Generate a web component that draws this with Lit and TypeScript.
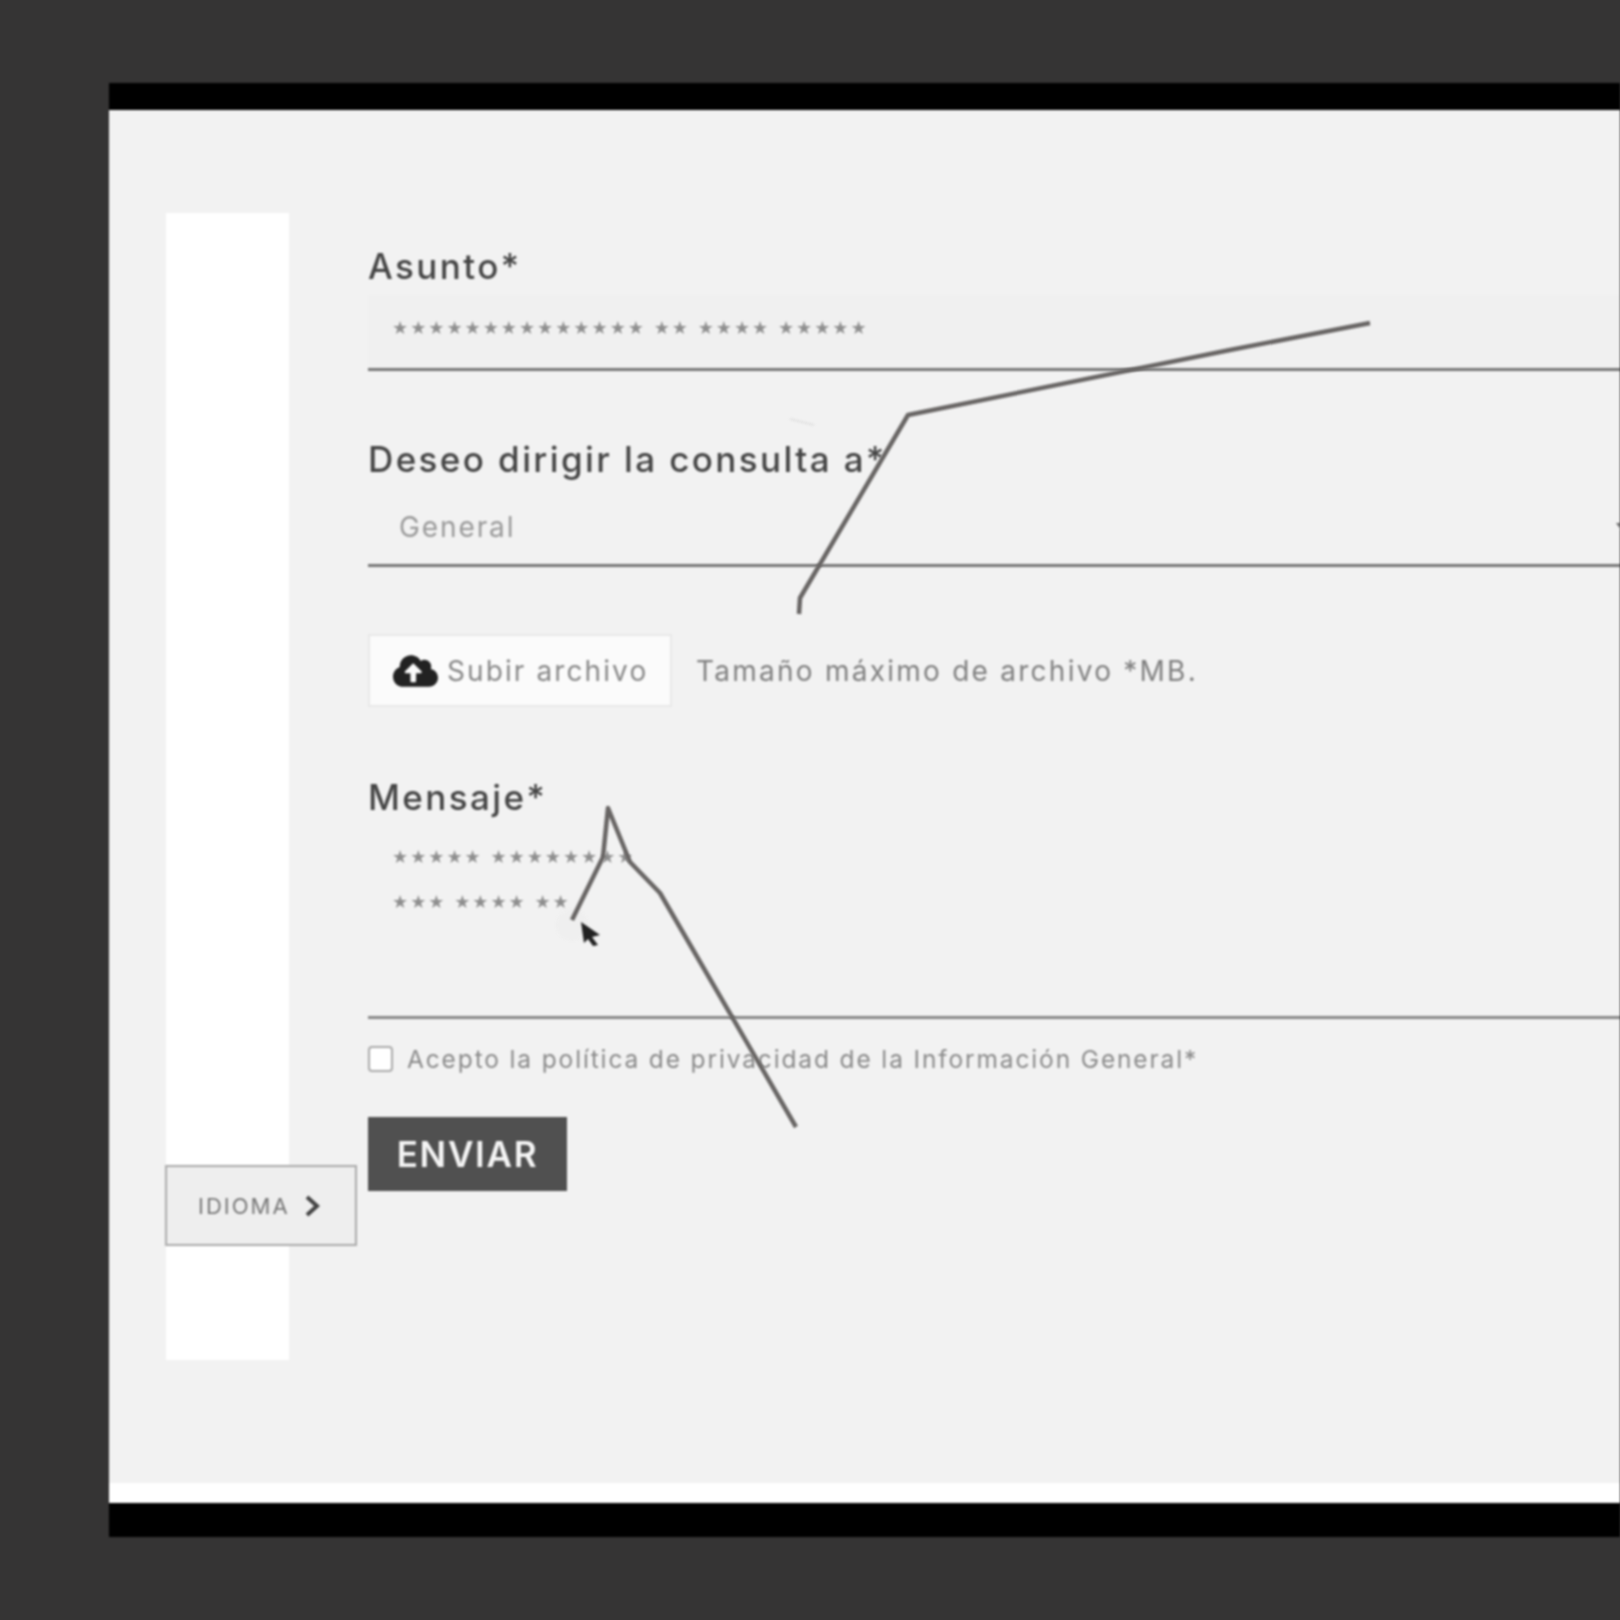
import { LitElement, html, css, svg } from "lit";
import { customElement } from "lit/decorators.js";

@customElement("app-root")
export class AppRoot extends LitElement {
  static styles = css`
    :host { display: block; position: relative; width: 1620px; height: 1620px; overflow: hidden; background: #353434; font-family: "Inter", "Liberation Sans", sans-serif; }
    .screen { padding: 83px 0 0 109px; box-sizing: border-box; height: 1620px; filter: blur(0.9px); }
    .frame { height: 1454px; box-sizing: border-box; border-top: 27px solid #000; border-bottom: 34px solid #000; display: flex; flex-direction: column; }
    .page { flex: 1; display: flex; padding: 103px 0 0 57px; background: #f2f2f2; border-bottom: 20px solid #fff; min-height: 0; }
    .rail { width: 123px; height: 1147px; background: #fff; flex: none; }
    .form { flex: 1; min-width: 0; margin-left: 79px; padding-top: 33px; display: flex; flex-direction: column; }
    .label { height: 40px; line-height: 40px; font-size: 35px; font-weight: 500; letter-spacing: 2.4px; color: #454545; white-space: nowrap; }
    .label.second { margin-top: 68px; }
    .label.third { margin-top: 70px; }
    .field { box-sizing: border-box; border-bottom: 3px solid #777; display: flex; align-items: center; }
    .subject { height: 85px; padding: 0 0 0 24px; background: linear-gradient(#f2f2f2 9px, #f0f0f0 9px); }
    .select { height: 88px; padding: 10px 0 0 31px; justify-content: space-between; font-size: 28px; letter-spacing: 1.9px; color: #999; }
    .caret { width: 0; height: 0; margin-right: -8px; border-left: 6px solid transparent; border-right: 6px solid transparent; border-top: 8px solid #666; }
    .stars { font-family: "DejaVu Sans", sans-serif; font-size: 18px; color: #8f8f8f; letter-spacing: 2px; line-height: 45px; white-space: pre; }
    .upload { display: flex; align-items: center; margin-top: 67px; height: 73px; }
    .upload-btn { box-sizing: border-box; width: 304px; height: 73px; background: #fbfbfb; border: 2px solid #e8e8e8; display: flex; align-items: center; padding-left: 23px; gap: 9px; font-size: 28px; letter-spacing: 2.1px; color: #888; white-space: nowrap; }
    .cloud { width: 45px; height: 36px; fill: #222; flex: none; }
    .hint { margin-left: 24px; font-size: 28px; letter-spacing: 2.25px; color: #808080; white-space: nowrap; }
    .message { box-sizing: border-box; height: 202px; padding: 17px 0 0 24px; border-bottom: 3px solid #888; }
    .check { display: flex; align-items: center; margin-top: 24px; height: 32px; gap: 14px; font-size: 24.5px; letter-spacing: 1.86px; color: #8a8a8a; white-space: nowrap; }
    .box { box-sizing: border-box; width: 25px; height: 26px; background: #fff; border: 2px solid #aaa; border-radius: 4px; flex: none; }
    .send { box-sizing: border-box; width: 199px; height: 74px; margin-top: 42px; background: #505050; color: #f5f5f5; display: flex; align-items: center; justify-content: center; font-size: 35px; font-weight: 600; letter-spacing: 1.75px; }
    .idioma { position: absolute; left: 165px; top: 1165px; box-sizing: border-box; width: 192px; height: 81px; background: #eeeeee; border: 2px solid #aaa; display: flex; align-items: center; padding-left: 31px; gap: 14px; font-size: 22px; letter-spacing: 2px; color: #777; filter: blur(0.8px); }
    .chev { width: 16px; height: 22px; fill: none; stroke: #444; stroke-width: 4; }
    .ink { position: absolute; inset: 0; width: 1620px; height: 1620px; filter: blur(0.8px); pointer-events: none; }
    .ink polyline { fill: none; stroke: #686564; stroke-width: 4.5; stroke-linejoin: round; }
  `;

  render() {
    return html`
      <div class="screen">
        <div class="frame">
          <div class="page">
            <div class="rail"></div>
            <div class="form">
              <div class="label">Asunto*</div>
              <div class="field subject"><span class="stars">${"★".repeat(14)} ★★ ★★★★ ★★★★★</span></div>
              <div class="label second">Deseo dirigir la consulta a*</div>
              <div class="field select"><span>General</span><span class="caret"></span></div>
              <div class="upload">
                <div class="upload-btn">
                  <svg class="cloud" viewBox="0 0 640 512"><path d="M537.6 226.6c4.1-10.7 6.4-22.4 6.4-34.6 0-53-43-96-96-96-19.7 0-38.1 6-53.3 16.2C367 64.2 315.3 32 256 32c-88.4 0-160 71.6-160 160 0 2.7.1 5.4.2 8.1C40.2 219.8 0 273.2 0 336c0 79.5 64.5 144 144 144h368c70.7 0 128-57.3 128-128 0-61.9-44-113.6-102.4-125.4zM393.4 288H328v112c0 8.8-7.2 16-16 16h-48c-8.8 0-16-7.2-16-16V288h-65.4c-14.3 0-21.4-17.2-11.3-27.3l105.4-105.4c6.2-6.2 16.4-6.2 22.6 0l105.4 105.4c10.1 10.1 2.9 27.3-11.3 27.3z"/></svg>
                  <span>Subir archivo</span>
                </div>
                <span class="hint">Tamaño máximo de archivo *MB.</span>
              </div>
              <div class="label third">Mensaje*</div>
              <div class="message">
                <div class="stars">★★★★★ ★★★★★★★★</div>
                <div class="stars">★★★ ★★★★ ★★</div>
              </div>
              <div class="check"><span class="box"></span><span>Acepto la política de privacidad de la Información General*</span></div>
              <div class="send">ENVIAR</div>
            </div>
          </div>
        </div>
      </div>
      <div class="idioma"><span>IDIOMA</span><svg class="chev" viewBox="0 0 16 22"><polyline points="3,2 13,11 3,20"/></svg></div>
      <svg class="ink" viewBox="0 0 1620 1620">
        ${svg`
          <circle cx="572" cy="925" r="16" fill="#efefef"/>
          <line x1="790" y1="419" x2="814" y2="425" stroke="#e2e2e2" stroke-width="2"/>
          <polyline points="1370,323 1230,350 908,415 800,598 799,614"/>
          <polyline points="572,920 603,857 608,808 630,862 660,893 796,1127"/>
          <path d="M581 922 L600 935 L592 937 L598 945 L593 946 L588 939 L584 943 Z" fill="#222"/>
        `}
      </svg>
    `;
  }
}
